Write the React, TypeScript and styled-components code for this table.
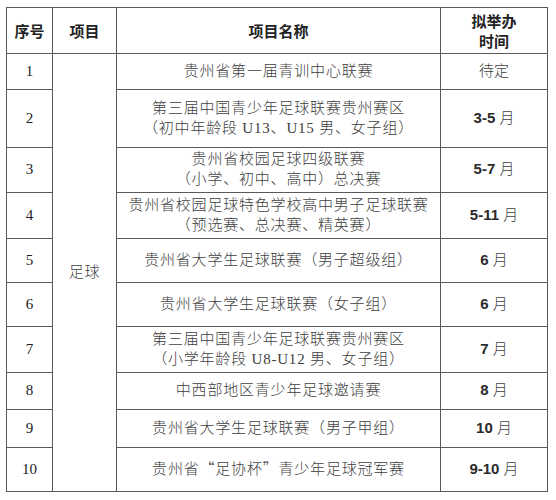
import React from "react";
import styled, {createGlobalStyle} from "styled-components";

const GlobalStyle = createGlobalStyle`
    html, body {
        margin: 0;
        padding: 0;
        background: #ffffff;
    }
    body {
        padding: 7px 0 0 6px;
    }
`;

const StyledTable = styled.table`
    border-collapse: collapse;
    table-layout: fixed;
    width: 541px;
    font-family: "Liberation Serif", "Noto Sans CJK SC", serif;
    font-size: 15px;
    color: #404040;
`;

const StyledRow = styled.tr<{ $height: number }>`
    height: ${props => props.$height}px;
`;

const StyledHead = styled.th`
    border: 1px solid #5a5a5a;
    padding: 0;
    font-family: "Noto Sans CJK SC", sans-serif;
    font-weight: 600;
    font-size: 15px;
    line-height: 20px;
    color: #222222;
    text-align: center;
    vertical-align: middle;
`;

const StyledCell = styled.td`
    border: 1px solid #5a5a5a;
    padding: 0 0 2px;
    text-align: center;
    vertical-align: middle;
    line-height: 20px;
    letter-spacing: 0.8px;
    font-weight: 300;
`;

const StyledIndex = styled(StyledCell)`
    color: #222222;
    font-weight: 400;
    letter-spacing: 0;
`;

const StyledTime = styled(StyledCell)`
    letter-spacing: 0;
`;

const StyledNum = styled.span`
    font-family: "Liberation Sans", sans-serif;
    font-weight: 700;
    color: #2a2a2a;
`;

const StyledCjk = styled.span`
    font-family: "Noto Sans CJK SC", sans-serif;
`;

interface Item {
    lines: React.ReactNode[];
    num?: string;
    time: string;
    height: number;
}

const items: Item[] = [
    {lines: ["贵州省第一届青训中心联赛"], time: "待定", height: 36},
    {lines: ["第三届中国青少年足球联赛贵州赛区", "（初中年龄段 U13、U15 男、女子组）"], num: "3-5", time: "月", height: 58},
    {lines: ["贵州省校园足球四级联赛", "（小学、初中、高中）总决赛"], num: "5-7", time: "月", height: 45},
    {lines: ["贵州省校园足球特色学校高中男子足球联赛", "（预选赛、总决赛、精英赛）"], num: "5-11", time: "月", height: 46},
    {lines: ["贵州省大学生足球联赛（男子超级组）"], num: "6", time: "月", height: 44},
    {lines: ["贵州省大学生足球联赛（女子组）"], num: "6", time: "月", height: 44},
    {lines: ["第三届中国青少年足球联赛贵州赛区", "（小学年龄段 U8-U12 男、女子组）"], num: "7", time: "月", height: 46},
    {lines: ["中西部地区青少年足球邀请赛"], num: "8", time: "月", height: 37},
    {lines: ["贵州省大学生足球联赛（男子甲组）"], num: "10", time: "月", height: 38},
    {lines: [<>贵州省<StyledCjk>“</StyledCjk>足协杯<StyledCjk>”</StyledCjk>青少年足球冠军赛</>], num: "9-10", time: "月", height: 44},
];

export default function App() {
    return (
        <>
            <GlobalStyle/>
            <StyledTable>
                <colgroup>
                    <col style={{width: 46}}/>
                    <col style={{width: 64}}/>
                    <col style={{width: 324}}/>
                    <col style={{width: 107}}/>
                </colgroup>
                <thead>
                <StyledRow $height={46}>
                    <StyledHead>序号</StyledHead>
                    <StyledHead>项目</StyledHead>
                    <StyledHead>项目名称</StyledHead>
                    <StyledHead>拟举办<br/>时间</StyledHead>
                </StyledRow>
                </thead>
                <tbody>
                {items.map((item, i) => (
                    <StyledRow key={i} $height={item.height}>
                        <StyledIndex>{i + 1}</StyledIndex>
                        {i === 0 && <StyledCell rowSpan={items.length}>足球</StyledCell>}
                        <StyledCell>
                            {item.lines.map((line, j) => (
                                <div key={j}>{line}</div>
                            ))}
                        </StyledCell>
                        <StyledTime>
                            {item.num && <StyledNum>{item.num} </StyledNum>}
                            {item.time}
                        </StyledTime>
                    </StyledRow>
                ))}
                </tbody>
            </StyledTable>
        </>
    );
}
